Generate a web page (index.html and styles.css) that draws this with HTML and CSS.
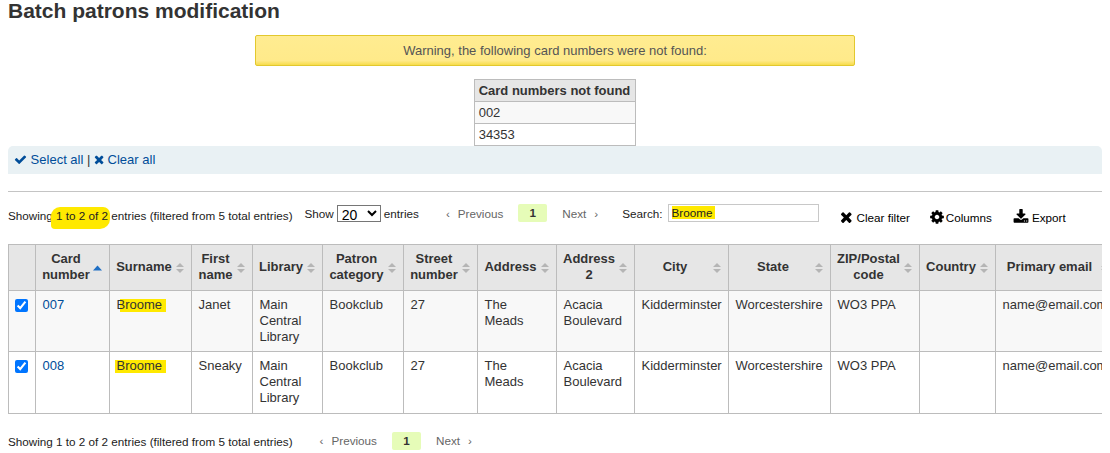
FILE: index.html
```html
<!DOCTYPE html>
<html lang="en">
<head>
<meta charset="utf-8">
<title>Batch patrons modification</title>
<link rel="stylesheet" href="styles.css">
</head>
<body>
<h1 class="title">Batch patrons modification</h1>
<div class="dialog">Warning, the following card numbers were not found:</div>
<table class="notfound">
  <thead><tr><th>Card numbers not found</th></tr></thead>
  <tbody>
    <tr class="odd"><td>002</td></tr>
    <tr><td>34353</td></tr>
  </tbody>
</table>
<div class="selections">
  <a href="#"><svg class="ico" viewBox="0 0 1792 1792"><path d="M1671 566q0 40-28 68l-724 724-136 136q-28 28-68 28t-68-28l-136-136-362-362q-28-28-28-68t28-68l136-136q28-28 68-28t68 28l294 295 656-657q28-28 68-28t68 28l136 136q28 28 28 68z"/></svg> Select all</a> | <a href="#"><svg class="ico" viewBox="0 0 1792 1792"><path d="M1298 1322q0 40-28 68l-136 136q-28 28-68 28t-68-28l-294-294-294 294q-28 28-68 28t-68-28l-136-136q-28-28-28-68t28-68l294-294-294-294q-28-28-28-68t28-68l136-136q28-28 68-28t68 28l294 294 294-294q28-28 68-28t68 28l136 136q28 28 28 68t-28 68l-294 294 294 294q28 28 28 68z"/></svg> Clear all</a>
</div>
<hr class="rule">
<div class="toolbar">
  <div class="info">Showing <mark class="blob">1 to 2 of 2</mark> entries (filtered from 5 total entries)</div>
  <label class="length"><span>Show</span><select><option>20</option><option>50</option></select><span>entries</span></label>
  <div class="pager">
    <a class="step" href="#"><span class="chev-l">‹</span>Previous</a>
    <span class="current">1</span>
    <a class="step" href="#">Next<span class="chev-r">›</span></a>
  </div>
  <label class="search"><span>Search:</span><span class="searchbox"><mark class="typed">Broome</mark></span></label>
  <div class="actions">
    <a href="#"><svg class="ico-lg" viewBox="0 0 1792 1792"><path d="M1298 1322q0 40-28 68l-136 136q-28 28-68 28t-68-28l-294-294-294 294q-28 28-68 28t-68-28l-136-136q-28-28-28-68t28-68l294-294-294-294q-28-28-28-68t28-68l136-136q28-28 68-28t68 28l294 294 294-294q28-28 68-28t68 28l136 136q28 28 28 68t-28 68l-294 294 294 294q28 28 28 68z"/></svg>Clear filter</a>
    <a href="#"><svg class="ico-lg" viewBox="0 0 1792 1792"><path d="M1152 896q0-106-75-181t-181-75-181 75-75 181 75 181 181 75 181-75 75-181zm512-109v222q0 12-8 23t-20 13l-185 28q-19 54-39 91 35 50 107 138 10 12 10 25t-9 23q-27 37-99 108t-94 71q-12 0-26-9l-138-108q-44 23-91 38-16 136-29 186-7 28-36 28h-222q-14 0-24.500-8.500t-11.500-21.500l-28-184q-49-16-90-37l-141 107q-10 9-25 9-14 0-25-11-126-114-165-168-7-10-7-23 0-12 8-23 15-21 51-66.500t54-70.500q-27-50-41-99l-183-27q-13-2-21-12.500t-8-23.500v-222q0-12 8-23t19-13l186-28q14-46 39-92-40-57-107-138-10-12-10-24 0-10 9-23 26-36 98.500-107.500t94.500-71.500q13 0 26 10l138 107q44-23 91-38 16-136 29-186 7-28 36-28h222q14 0 24.500 8.500t11.500 21.500l28 184q49 16 90 37l142-107q9-9 24-9 13 0 25 10 129 119 165 170 7 8 7 22 0 12-8 23-15 21-51 66.500t-54 70.500q26 50 41 98l183 28q13 2 21 12.500t8 23.500z"/></svg>Columns</a>
    <a href="#"><svg class="ico-lg" viewBox="0 0 1792 1792"><path d="M1344 1344q0-26-19-45t-45-19-45 19-19 45 19 45 45 19 45-19 19-45zm256 0q0-26-19-45t-45-19-45 19-19 45 19 45 45 19 45-19 19-45zm128-224v320q0 40-28 68t-68 28h-1472q-40 0-68-28t-28-68v-320q0-40 28-68t68-28h465l135 136q58 56 136 56t136-56l136-136h464q40 0 68 28t28 68zm-325-569q17 41-14 70l-448 448q-18 19-45 19t-45-19l-448-448q-31-29-14-70 17-39 59-39h256v-448q0-26 19-45t45-19h256q26 0 45 19t19 45v448h256q42 0 59 39z"/></svg>Export</a>
  </div>
</div>
<div class="scroller">
<table class="patrons">
  <colgroup>
    <col class="c1"><col class="c2"><col class="c3"><col class="c4"><col class="c5"><col class="c6"><col class="c7"><col class="c8"><col class="c9"><col class="c10"><col class="c11"><col class="c12"><col class="c13"><col class="c14">
  </colgroup>
  <thead>
    <tr>
      <th></th>
      <th class="sorted">Card number</th>
      <th class="sortable">Surname</th>
      <th class="sortable">First name</th>
      <th class="sortable">Library</th>
      <th class="sortable">Patron category</th>
      <th class="sortable">Street number</th>
      <th class="sortable">Address</th>
      <th class="sortable">Address 2</th>
      <th class="sortable">City</th>
      <th class="sortable">State</th>
      <th class="sortable">ZIP/Postal code</th>
      <th class="sortable">Country</th>
      <th class="sortable">Primary email</th>
    </tr>
  </thead>
  <tbody>
    <tr class="odd">
      <td class="check"><input type="checkbox" checked></td>
      <td><a href="#">007</a></td>
      <td><mark class="pen pen-part">Broome</mark></td>
      <td>Janet</td>
      <td>Main Central Library</td>
      <td>Bookclub</td>
      <td>27</td>
      <td>The<br>Meads</td>
      <td>Acacia Boulevard</td>
      <td>Kidderminster</td>
      <td>Worcestershire</td>
      <td>WO3 PPA</td>
      <td></td>
      <td>name@email.com</td>
    </tr>
    <tr>
      <td class="check"><input type="checkbox" checked></td>
      <td><a href="#">008</a></td>
      <td><mark class="pen">Broome</mark></td>
      <td>Sneaky</td>
      <td>Main Central Library</td>
      <td>Bookclub</td>
      <td>27</td>
      <td>The<br>Meads</td>
      <td>Acacia Boulevard</td>
      <td>Kidderminster</td>
      <td>Worcestershire</td>
      <td>WO3 PPA</td>
      <td></td>
      <td>name@email.com</td>
    </tr>
  </tbody>
</table>
</div>
<div class="footer">
  <div class="info">Showing 1 to 2 of 2 entries (filtered from 5 total entries)</div>
  <div class="pager">
    <a class="step" href="#"><span class="chev-l">‹</span>Previous</a>
    <span class="current">1</span>
    <a class="step" href="#">Next<span class="chev-r">›</span></a>
  </div>
</div>
</body>
</html>
```
FILE: styles.css
```css
html, body { background: #fff; }
body {
  margin: 0;
  padding: 0 8px;
  height: 453px;
  overflow: hidden;
  box-sizing: border-box;
  font-family: "Liberation Sans", Arial, sans-serif;
  font-size: 11.7px;
  color: #333;
}
a { color: #004d99; text-decoration: none; }
mark { color: inherit; background: #ffe900; }

.title {
  margin: 0;
  font-size: 21px;
  line-height: 22px;
  font-weight: bold;
  color: #333;
}
.dialog {
  box-sizing: border-box;
  width: 600px;
  height: 31px;
  margin: 13px auto 0;
  background: linear-gradient(#ffec91 0, #ffea8a 85%, #f7dc4a 100%);
  border: 1px solid #e2c82e;
  border-radius: 2px;
  font-size: 13px;
  line-height: 29px;
  text-align: center;
  color: #555;
}
.notfound {
  margin: 13px auto 0;
  border-collapse: collapse;
  font-size: 13px;
}
.notfound th, .notfound td {
  box-sizing: border-box;
  height: 22px;
  padding: 0 5px 0 4px;
  border: 1px solid #bcbcbc;
  line-height: 18px;
  text-align: left;
}
.notfound th { background: #e6e6e6; font-weight: bold; }
.odd td { background: #f8f8f8; }

.selections {
  height: 28px;
  padding: 0 6px;
  background: #e9f1f4;
  border-radius: 5px 5px 0 0;
  font-size: 13px;
  line-height: 27px;
}
.ico { width: 13px; height: 13px; fill: currentColor; vertical-align: -2px; }
.selections a + a .ico { margin-right: -3px; }
.rule { height: 1px; margin: 17px 0 0; border: 0; background: #c4c4c4; }

.toolbar {
  display: flex;
  align-items: center;
  height: 34px;
  margin: 6px 0 12px;
  white-space: nowrap;
  color: #222;
}
.blob {
  padding: 2px 2px 7px 5px;
  margin: 0 -2px 0 -5px;
  border-radius: 9px 7px 10px 4px;
}
.length { display: flex; align-items: center; gap: 3px; margin: 0 0 4px 12px; }
.length select {
  width: 44px;
  height: 17px;
  margin: 0;
  padding: 0;
  font: 14px "Liberation Sans", Arial, sans-serif;
  background: #fff;
}
.pager { display: flex; align-items: center; margin: 0 0 4px 27px; }
.step { color: #666; }
.chev-l { margin-right: 8px; }
.chev-r { margin-left: 8px; }
.current {
  box-sizing: border-box;
  width: 29px;
  height: 18px;
  margin: 0 15px;
  background: #e6fcb8;
  border-radius: 2px;
  color: #333;
  font-weight: bold;
  line-height: 18px;
  text-align: center;
}
.search { display: flex; align-items: center; gap: 5px; margin: 0 0 4px 24px; }
.searchbox {
  box-sizing: border-box;
  width: 151px;
  height: 18px;
  padding-left: 3px;
  border: 1px solid #c8c8c8;
  line-height: 15px;
}
.typed { padding-right: 3px; }
.actions { display: flex; gap: 19px; margin-left: 21px; padding-top: 4px; }
.actions a { display: flex; align-items: center; gap: 1px; color: #000; }
.actions a:last-child { gap: 3px; margin-left: 2px; }
.ico-lg { width: 16px; height: 16px; fill: currentColor; }

.scroller { overflow: hidden; }
.patrons {
  table-layout: fixed;
  width: 1108px;
  border-collapse: collapse;
  font-size: 13px;
  line-height: 16px;
}
.c1 { width: 27px; }
.c2 { width: 74px; }
.c3 { width: 82px; }
.c4 { width: 61px; }
.c5 { width: 70px; }
.c6 { width: 81px; }
.c7 { width: 74px; }
.c8 { width: 79px; }
.c9 { width: 78px; }
.c10 { width: 94px; }
.c11 { width: 102px; }
.c12 { width: 89px; }
.c13 { width: 76px; }
.c14 { width: 121px; }
.patrons th, .patrons td { border: 1px solid #bcbcbc; }
.patrons th {
  box-sizing: border-box;
  height: 46px;
  padding: 0 19px 2px 6px;
  background-color: #e6e6e6;
  background-repeat: no-repeat;
  background-position: right 7px center;
  font-weight: bold;
  text-align: center;
}
.sortable {
  background-image: url("data:image/svg+xml,%3Csvg xmlns='http://www.w3.org/2000/svg' width='8' height='10'%3E%3Cpath fill='%23b5b5b5' d='M4 0 8 4H0zM0 6h8l-4 4z'/%3E%3C/svg%3E");
}
.sorted {
  background-image: url("data:image/svg+xml,%3Csvg xmlns='http://www.w3.org/2000/svg' width='9' height='10'%3E%3Cpath fill='%231f6fc4' d='M4.500 2.500 9 7.500H0z'/%3E%3C/svg%3E");
}
.patrons td {
  box-sizing: border-box;
  height: 61px;
  padding: 6px 6.5px 4px;
  vertical-align: top;
  overflow: hidden;
}
.patrons tbody tr:last-child td { height: 62px; }
.patrons td.check { padding: 8px 0 0 6px; }
.check input { display: block; width: 13px; height: 13px; margin: 0; }
.pen {
  margin: 0 -2px;
  padding: 0 4px 0 2px;
  background: linear-gradient(#ffe900, #ffe900) no-repeat bottom / 100% 13px;
}
.pen-part {
  background: linear-gradient(90deg, transparent 5px, #ffe900 5px) no-repeat bottom / 100% 13px;
}

.footer { display: flex; align-items: center; height: 18px; margin-top: 18px; color: #222; white-space: nowrap; }
.footer .pager { margin: 0 0 1px 27px; }
```
